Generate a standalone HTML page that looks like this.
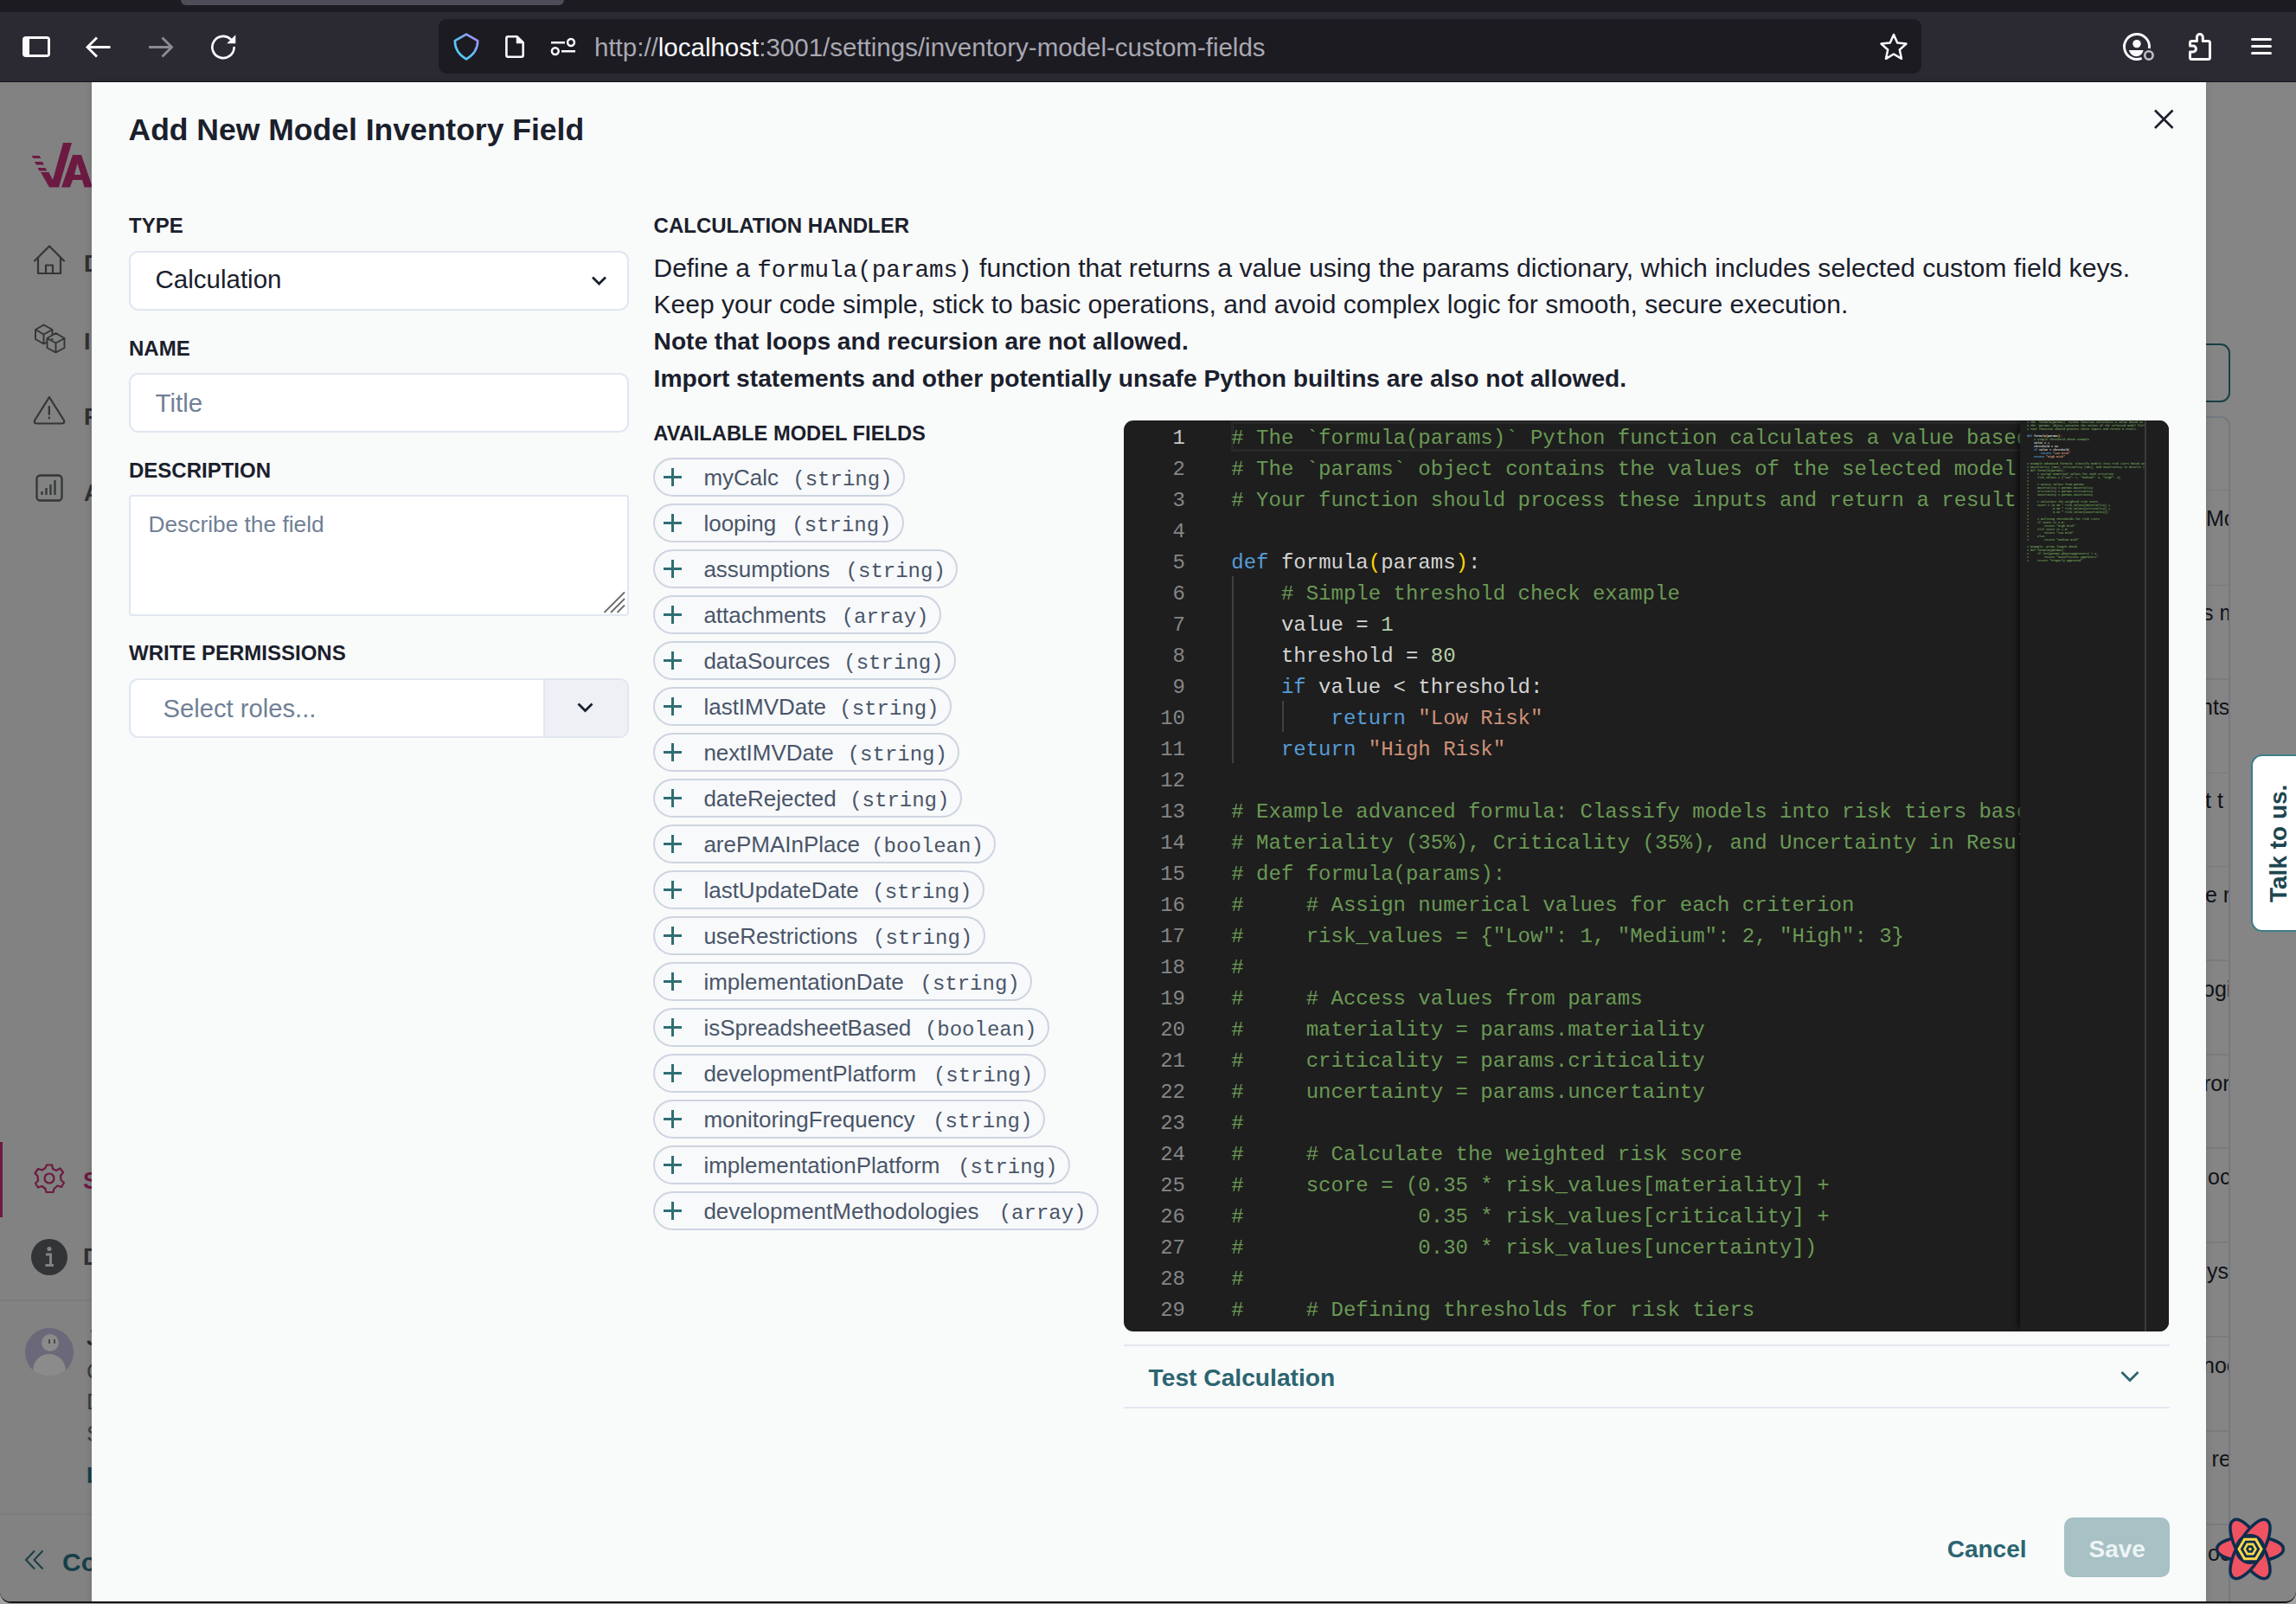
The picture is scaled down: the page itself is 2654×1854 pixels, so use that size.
<!DOCTYPE html>
<html><head><meta charset="utf-8">
<style>
*{box-sizing:border-box;margin:0;padding:0}
html,body{width:2654px;height:1854px;overflow:hidden;background:#a3a3a3}
body{position:relative;font-family:"Liberation Sans",sans-serif}
.a{position:absolute}
.t{position:absolute;white-space:pre;line-height:1}
.mono{font-family:"Liberation Mono",monospace}
svg{position:absolute;overflow:visible}
</style></head><body>
<!-- ===== BROWSER CHROME ===== -->
<div class="a" style="left:0;top:0;width:2654px;height:14px;background:#1c1b22"></div>
<div class="a" style="left:209px;top:0;width:443px;height:6px;background:#4e4c57;border-radius:0 0 6px 6px"></div>
<div class="a" style="left:0;top:14px;width:2654px;height:80px;background:#2b2a33"></div>
<div class="a" style="left:0;top:94px;width:2654px;height:1px;background:#0f0f12"></div>
<!-- sidebar toggle icon -->
<div class="a" style="left:26px;top:42px;width:32px;height:24px;background:#fbfbfe;border-radius:4px"></div>
<div class="a" style="left:34.3px;top:45.2px;width:20.7px;height:17.6px;background:#2b2a33"></div>
<!-- back -->
<svg style="left:0;top:0" width="1" height="1"><path d="M101 54.5 L127.5 54.5 M112 43.5 L101 54.5 L112 65.5" fill="none" stroke="#fbfbfe" stroke-width="2.9" stroke-linecap="butt"/></svg>
<!-- forward -->
<svg style="left:0;top:0" width="1" height="1"><path d="M172 54.5 L198.5 54.5 M187.5 43.5 L198.5 54.5 L187.5 65.5" fill="none" stroke="#8b8a90" stroke-width="2.9"/></svg>
<!-- reload -->
<svg style="left:0;top:0" width="1" height="1"><path d="M270.6 55 A12.6 12.6 0 1 1 266.5 45.2" fill="none" stroke="#fbfbfe" stroke-width="2.7" stroke-linecap="round"/><path d="M262.2 50.2 L272.3 50.2 L272.3 40.2 Z" fill="#fbfbfe"/></svg>
<!-- urlbar -->
<div class="a" style="left:507px;top:22px;width:1714px;height:63px;background:#1c1b22;border-radius:9px"></div>
<svg style="left:0;top:0" width="1" height="1"><defs><linearGradient id="sg" gradientUnits="userSpaceOnUse" x1="528" y1="64" x2="552" y2="42"><stop offset="0" stop-color="#54c8f5"/><stop offset="0.45" stop-color="#62bff7"/><stop offset="1" stop-color="#a98cf8"/></linearGradient></defs><path d="M539 39.6 L552.2 47.2 C552.2 56.5 547.5 63.3 539 68.4 C530.5 63.3 525.8 56.5 525.8 47.2 Z" fill="none" stroke="url(#sg)" stroke-width="2.6" stroke-linejoin="round"/></svg>
<svg style="left:0;top:0" width="1" height="1"><path d="M587.3 42.3 L597.8 42.3 L604.7 49.2 L604.7 63.8 Q604.7 65.7 602.8 65.7 L587.3 65.7 Q585.4 65.7 585.4 63.8 L585.4 44.2 Q585.4 42.3 587.3 42.3 Z" fill="none" stroke="#fbfbfe" stroke-width="2.6" stroke-linejoin="round"/><path d="M596.8 41 L606 50.3 L596.8 50.3 Z" fill="#fbfbfe"/></svg>
<svg style="left:0;top:0" width="1" height="1"><path d="M637 49.3 L653 49.3 M649 59.3 L665 59.3" fill="none" stroke="#fbfbfe" stroke-width="2.6"/><circle cx="660" cy="49" r="3.9" fill="none" stroke="#fbfbfe" stroke-width="2.5"/><circle cx="641.8" cy="59.1" r="3.9" fill="none" stroke="#fbfbfe" stroke-width="2.5"/></svg>
<div class="t" style="left:687px;top:40px;font-size:29.5px;color:#a9a8b1">http://<span style="color:#fbfbfe">localhost</span>:3001/settings/inventory-model-custom-fields</div>
<!-- star -->
<svg style="left:0;top:0" width="1" height="1"><path d="M2189 40 L2193.2 49.6 L2203.5 50.6 L2195.8 57.5 L2198 67.8 L2189 62.5 L2180 67.8 L2182.2 57.5 L2174.5 50.6 L2184.8 49.6 Z" fill="none" stroke="#fbfbfe" stroke-width="2.5" stroke-linejoin="round"/></svg>
<!-- account -->
<svg style="left:0;top:0" width="1" height="1"><path d="M2484.36 56.02 A14.5 14.5 0 1 0 2475.67 67.35" fill="none" stroke="#fbfbfe" stroke-width="2.9"/><circle cx="2470" cy="50.6" r="4.7" fill="#fbfbfe"/><path d="M2460.8 58 L2477.6 58 C2476.5 62.5 2473.5 65.2 2469.5 65.2 C2465.5 65.2 2462.3 62.5 2460.8 58 Z" fill="#fbfbfe"/><circle cx="2483.9" cy="63.9" r="4.7" fill="none" stroke="#bfbfc5" stroke-width="2.6"/></svg>
<!-- puzzle -->
<svg style="left:0;top:0" width="1" height="1"><path d="M2533.5 47.6 L2539.4 47.6 L2539.4 42.9 A3.45 3.45 0 0 1 2546.3 42.9 L2546.3 47.6 L2552.5 47.6 Q2554.5 47.6 2554.5 49.6 L2554.5 66.5 Q2554.5 68.5 2552.5 68.5 L2533.5 68.5 Q2531.5 68.5 2531.5 66.5 L2531.5 59.9 L2535 59.9 A3.4 3.4 0 0 0 2535 53.1 L2531.5 53.1 L2531.5 49.6 Q2531.5 47.6 2533.5 47.6 Z" fill="none" stroke="#fbfbfe" stroke-width="3" stroke-linejoin="round"/></svg>
<!-- menu -->
<div class="a" style="left:2602px;top:43.7px;width:24px;height:3px;background:#fbfbfe;border-radius:1.5px"></div>
<div class="a" style="left:2602px;top:51.8px;width:24px;height:3px;background:#fbfbfe;border-radius:1.5px"></div>
<div class="a" style="left:2602px;top:59.7px;width:24px;height:3px;background:#fbfbfe;border-radius:1.5px"></div>

<!-- ===== BACKGROUND PAGE (dimmed) ===== -->
<div class="a" style="left:0;top:94px;width:2654px;height:1758.5px;background:#151515;border-radius:0 0 13px 13px"></div>
<div id="bg" class="a" style="left:0;top:95px;width:2654px;height:1756px;background:#858585;border-radius:0 0 12px 12px;overflow:hidden">
<div class="a" style="left:0;top:-95px;width:2654px;height:1854px">
<div class="a" style="left:0;top:95px;width:106px;height:1756px;background:#818281"></div>
<!-- logo -->
<svg style="left:0;top:0" width="1" height="1">
<path d="M36.5 180 L45.5 180 L47.5 183 L38.5 183 Z M40 187 L49 187 L51 190.5 L42 190.5 Z M43.5 194 L52.5 194 L54.5 197.5 L45.5 197.5 Z" fill="#6c1a42"/>
<path d="M47 199 L56.5 199 L61 208 L73 165 L83 165 L68 216.5 L57 216.5 Z" fill="#6c1a42"/>
<path d="M71 216.5 L84 179 L94 179 L107 216.5 L97.5 216.5 L95 208 L84 208 L81 216.5 Z M86 202 L93.5 202 L89.5 189 Z" fill="#6c1a42"/>
</svg>
<!-- home -->
<svg style="left:0;top:0" width="1" height="1"><path d="M40 301.5 L57 284.5 L74 301.5 M44 298 L44 316 L70 316 L70 298 M53 316 L53 306.5 L61 306.5 L61 316" fill="none" stroke="#333538" stroke-width="2.2" stroke-linejoin="round" stroke-linecap="round"/></svg>
<div class="t" style="left:97px;top:292px;font-size:27px;font-weight:bold;color:#2f3032">Dashboard</div>
<!-- cubes -->
<svg style="left:0;top:0" width="1" height="1"><path d="M41 381 L50.5 375.5 L60.5 381 L60.5 392 L50.5 397.5 L41 392 Z M41 381 L50.5 386.5 L60.5 381 M50.5 386.5 L50.5 397.5" fill="none" stroke="#333538" stroke-width="1.9" stroke-linejoin="round"/><path d="M54.5 391 L64.5 385 L74.5 391 L74.5 402 L64.5 407.5 L54.5 402 Z M54.5 391 L64.5 396.5 L74.5 391 M64.5 396.5 L64.5 407.5" fill="#818281" stroke="#333538" stroke-width="1.9" stroke-linejoin="round"/></svg>
<div class="t" style="left:97px;top:382px;font-size:27px;font-weight:bold;color:#2f3032">Inventory</div>
<!-- warning -->
<svg style="left:0;top:0" width="1" height="1"><path d="M57 459 L74 486 Q75 489.5 71.5 489.5 L42.5 489.5 Q39 489.5 40 486 Z M56.8 470 L56.8 479 M56.8 482.5 L56.8 483.5" fill="none" stroke="#333538" stroke-width="2.2" stroke-linejoin="round" stroke-linecap="round"/></svg>
<div class="t" style="left:97px;top:469px;font-size:27px;font-weight:bold;color:#2f3032">Risk</div>
<!-- chart -->
<svg style="left:0;top:0" width="1" height="1"><rect x="42.5" y="549.5" width="29" height="29" rx="4" fill="none" stroke="#333538" stroke-width="2.3"/><path d="M48.5 572 L48.5 568 M53.5 572 L53.5 564 M58.5 572 L58.5 560 M63.5 572 L63.5 555" fill="none" stroke="#333538" stroke-width="2.2"/></svg>
<div class="t" style="left:97px;top:557px;font-size:27px;font-weight:bold;color:#2f3032">Analytics</div>
<!-- active indicator -->
<div class="a" style="left:0;top:1320.0px;width:3px;height:87px;background:#6c1a42"></div>
<svg style="left:0;top:0" width="1" height="1"><g transform="translate(57,1362)"><circle r="5.5" fill="none" stroke="#6c1a42" stroke-width="2.2"/><path d="M-3 -15.5 L3 -15.5 L4 -11 L8 -9 L12.5 -11.5 L16 -7 L13 -3 L13.5 2 L17 5 L14 10 L9.5 8.5 L5.5 12 L4.5 16 L-3.5 16 L-4.5 12 L-8.5 9 L-13 10.5 L-16 6 L-13 2.5 L-13.5 -2.5 L-16.5 -6 L-13 -11 L-8.5 -9.5 L-4.5 -12 Z" fill="none" stroke="#6c1a42" stroke-width="2.2" stroke-linejoin="round"/></g></svg>
<div class="t" style="left:96px;top:1352.0px;font-size:27px;font-weight:bold;color:#6c1a42">Settings</div>
<!-- info -->
<div class="a" style="left:36px;top:1432.0px;width:42px;height:42px;border-radius:50%;background:#323436"></div>
<svg style="left:0;top:0" width="1" height="1"><circle cx="57" cy="1443.5" r="2.6" fill="#818281"/><path d="M 53 1450 L 58.5 1450 L 58.5 1462 M 52.5 1462.5 L 62 1462.5" fill="none" stroke="#818281" stroke-width="3"/></svg>
<div class="t" style="left:96px;top:1440.0px;font-size:27px;font-weight:bold;color:#2f3032">Docs</div>
<div class="a" style="left:0;top:1502.0px;width:106px;height:1.5px;background:#7b7c7d"></div>
<!-- avatar -->
<div class="a" style="left:29px;top:1535.0px;width:56px;height:56px;border-radius:50%;background:#6a6879;overflow:hidden">
 <div class="a" style="left:19px;top:7px;width:20px;height:20px;border-radius:50%;background:#8b8b8b"></div>
 <div class="a" style="left:9px;top:30px;width:38px;height:38px;border-radius:50%;background:#8b8b8b"></div>
</div>
<div class="a" style="left:56.3px;top:1548px;width:2px;height:4.5px;background:#4a4a4a"></div>
<div class="a" style="left:61.6px;top:1548px;width:2px;height:4.5px;background:#4a4a4a"></div>
<div class="t" style="left:100px;top:1533.0px;font-size:26px;font-weight:bold;color:#2a2b2c">John</div>
<div class="t" style="left:100px;top:1572.0px;font-size:26px;color:#3a3b3c">Customer</div>
<div class="t" style="left:100px;top:1607px;font-size:26px;color:#3a3b3c">Developer</div>
<div class="t" style="left:100px;top:1644px;font-size:26px;color:#3a3b3c">Settings</div>
<div class="t" style="left:100px;top:1692px;font-size:26px;font-weight:bold;color:#173f49">Logout</div>
<div class="a" style="left:0;top:1749.0px;width:106px;height:1.5px;background:#7b7c7d"></div>
<svg style="left:0;top:0" width="1" height="1"><path d="M 40 1792.5 L 30 1803 L 40 1813.5 M 49.5 1792.5 L 39.5 1803 L 49.5 1813.5" fill="none" stroke="#173f49" stroke-width="2"/></svg>
<div class="t" style="left:72px;top:1791.0px;font-size:30px;font-weight:bold;color:#173f49">Collapse</div>
<!-- right side -->
<div class="a" style="left:2440px;top:397.0px;width:137.5px;height:68px;border:2.2px solid #183f46;border-radius:11px"></div>
<div class="a" style="left:2440px;top:481.0px;width:137.5px;height:1460px;border:2px solid #747980;border-radius:11px"></div>
<div class="a" style="left:2440px;top:565.5px;width:137px;height:1.5px;background:#7a7b7c"></div>
<div class="a" style="left:2440px;top:675.5px;width:137px;height:1.5px;background:#7a7b7c"></div>
<div class="a" style="left:2440px;top:784.0px;width:137px;height:1.5px;background:#7a7b7c"></div>
<div class="a" style="left:2440px;top:892.5px;width:137px;height:1.5px;background:#7a7b7c"></div>
<div class="a" style="left:2440px;top:1000.5px;width:137px;height:1.5px;background:#7a7b7c"></div>
<div class="a" style="left:2440px;top:1109.0px;width:137px;height:1.5px;background:#7a7b7c"></div>
<div class="a" style="left:2440px;top:1218.0px;width:137px;height:1.5px;background:#7a7b7c"></div>
<div class="a" style="left:2440px;top:1326.0px;width:137px;height:1.5px;background:#7a7b7c"></div>
<div class="a" style="left:2440px;top:1435.0px;width:137px;height:1.5px;background:#7a7b7c"></div>
<div class="a" style="left:2440px;top:1544.0px;width:137px;height:1.5px;background:#7a7b7c"></div>
<div class="a" style="left:2440px;top:1653.0px;width:137px;height:1.5px;background:#7a7b7c"></div>
<div class="a" style="left:2440px;top:1761.0px;width:137px;height:1.5px;background:#7a7b7c"></div>
<div class="a" style="left:2440px;top:481px;width:136px;height:1370px;overflow:hidden"><div class="a" style="left:-2440px;top:-481px;width:2654px;height:1854px">
<div class="t" style="left:2550px;top:587.33px;font-size:25px;color:#111318">Mod</div>
<div class="t" style="left:2546px;top:696.03px;font-size:25px;color:#111318">s m</div>
<div class="t" style="left:2544px;top:804.73px;font-size:25px;color:#111318">nts</div>
<div class="t" style="left:2549px;top:913.43px;font-size:25px;color:#111318">t t</div>
<div class="t" style="left:2549px;top:1022.13px;font-size:25px;color:#111318">e r</div>
<div class="t" style="left:2546px;top:1130.83px;font-size:25px;color:#111318">ogi</div>
<div class="t" style="left:2547px;top:1239.53px;font-size:25px;color:#111318">ron</div>
<div class="t" style="left:2552px;top:1348.23px;font-size:25px;color:#111318">oc</div>
<div class="t" style="left:2551px;top:1456.93px;font-size:25px;color:#111318">ys</div>
<div class="t" style="left:2546px;top:1565.63px;font-size:25px;color:#111318">noc</div>
<div class="t" style="left:2556.6px;top:1674.33px;font-size:25px;color:#111318">re</div>
<div class="t" style="left:2552px;top:1783.03px;font-size:25px;color:#111318">oc</div>
</div></div>
</div>
</div>

<!-- ===== MODAL ===== -->
<div id="modal" class="a" style="left:106px;top:95px;width:2444px;height:1756px;background:#f9fafa;overflow:hidden;box-shadow:0 0 9px rgba(0,0,0,0.13)">
<div class="a" style="left:-106px;top:-95px;width:2654px;height:1854px">
<div class="t" style="left:148.5px;top:132.94px;font-size:35.5px;font-weight:bold;color:#1a202c">Add New Model Inventory Field</div>
<svg style="left:0;top:0" width="1" height="1"><path d="M2491 127.5 L2511.5 148 M2511.5 127.5 L2491 148" stroke="#1a202c" stroke-width="2.6" fill="none"/></svg>
<div class="t" style="left:149px;top:248.68px;font-size:24px;font-weight:bold;color:#1a202c">TYPE</div>
<div class="t" style="left:149px;top:390.68px;font-size:24px;font-weight:bold;color:#1a202c">NAME</div>
<div class="t" style="left:149px;top:532.38px;font-size:24px;font-weight:bold;color:#1a202c">DESCRIPTION</div>
<div class="t" style="left:149px;top:742.68px;font-size:24px;font-weight:bold;color:#1a202c">WRITE PERMISSIONS</div>
<div class="t" style="left:755.6px;top:249.38px;font-size:24px;font-weight:bold;color:#1a202c">CALCULATION HANDLER</div>
<div class="t" style="left:755.3px;top:490.13px;font-size:23.7px;font-weight:bold;color:#1a202c">AVAILABLE MODEL FIELDS</div>
<div class="a" style="left:148.5px;top:289.5px;width:578px;height:69px;background:#fff;border:2px solid #e1e6f0;border-radius:11px"></div>
<div class="t" style="left:179.5px;top:308.02px;font-size:29.5px;color:#1a202c">Calculation</div>
<svg style="left:0;top:0" width="1" height="1"><path d="M685 320.5 L692.5 328 L700 320.5" stroke="#1a202c" stroke-width="2.8" fill="none"/></svg>
<div class="a" style="left:148.5px;top:430.5px;width:578px;height:69px;background:#fff;border:2px solid #e1e6f0;border-radius:11px"></div>
<div class="t" style="left:179.5px;top:450.62px;font-size:29.5px;color:#718096">Title</div>
<div class="a" style="left:148.5px;top:572px;width:578px;height:140px;background:#fff;border:2px solid #e1e6f0;border-radius:4px"></div>
<div class="t" style="left:171.5px;top:592.73px;font-size:26.3px;color:#718096">Describe the field</div>
<svg style="left:0;top:0" width="1" height="1"><path d="M698.5 708 L722 684.5 M706 708 L722 692 M713.5 708 L722 699.5" stroke="#6b6b6b" stroke-width="1.8" fill="none"/></svg>
<div class="a" style="left:148.5px;top:784px;width:578px;height:69px;background:#fff;border:2px solid #e1e6f0;border-radius:11px;overflow:hidden"><div class="a" style="left:477px;top:0;width:100px;height:65px;background:#eef0f6;border-left:2px solid #e1e6f0"></div></div>
<div class="t" style="left:188.6px;top:804.78px;font-size:29.2px;color:#718096">Select roles...</div>
<svg style="left:0;top:0" width="1" height="1"><path d="M668.5 813.5 L676.5 821.5 L684.5 813.5" stroke="#1a202c" stroke-width="2.8" fill="none"/></svg>
<div class="t" style="left:755.6px;top:294.68px;font-size:29.9px;color:#1a202c">Define a <span class="mono" style="font-size:27.6px">formula(params)</span><span style="font-size:30.2px"> function that returns a value using the params dictionary, which includes selected custom field keys.</span></div>
<div class="t" style="left:755.6px;top:336.8px;font-size:30px;color:#1a202c">Keep your code simple, stick to basic operations, and avoid complex logic for smooth, secure execution.</div>
<div class="t" style="left:755.6px;top:380.81px;font-size:28.1px;font-weight:bold;color:#1a202c">Note that loops and recursion are not allowed.</div>
<div class="t" style="left:755.6px;top:422.92px;font-size:28.2px;font-weight:bold;color:#1a202c">Import statements and other potentially unsafe Python builtins are also not allowed.</div>
<div class="a" style="left:755.2px;top:529.1px;width:290.8px;height:45px;border:2px solid #cdd5e0;border-radius:23px;background:#f7f9fb"></div>
<svg style="left:0;top:0" width="1" height="1"><path d="M767 551.6 L788 551.6 M777.5 541.1 L777.5 562.1" stroke="#2f6e73" stroke-width="3" fill="none"/></svg>
<div class="t" style="left:813.4px;top:539.19px;font-size:26px;color:#4a5568">myCalc</div>
<div class="t mono" style="left:916.3px;top:542.81px;font-size:24px;color:#4a5568">(string)</div>
<div class="a" style="left:755.2px;top:582.1px;width:289.8px;height:45px;border:2px solid #cdd5e0;border-radius:23px;background:#f7f9fb"></div>
<svg style="left:0;top:0" width="1" height="1"><path d="M767 604.6 L788 604.6 M777.5 594.1 L777.5 615.1" stroke="#2f6e73" stroke-width="3" fill="none"/></svg>
<div class="t" style="left:813.4px;top:592.19px;font-size:26px;color:#4a5568">looping</div>
<div class="t mono" style="left:915.3px;top:595.81px;font-size:24px;color:#4a5568">(string)</div>
<div class="a" style="left:755.2px;top:635.1px;width:352.1px;height:45px;border:2px solid #cdd5e0;border-radius:23px;background:#f7f9fb"></div>
<svg style="left:0;top:0" width="1" height="1"><path d="M767 657.6 L788 657.6 M777.5 647.1 L777.5 668.1" stroke="#2f6e73" stroke-width="3" fill="none"/></svg>
<div class="t" style="left:813.4px;top:645.19px;font-size:26px;color:#4a5568">assumptions</div>
<div class="t mono" style="left:977.6px;top:648.81px;font-size:24px;color:#4a5568">(string)</div>
<div class="a" style="left:755.2px;top:688.1px;width:332.8px;height:45px;border:2px solid #cdd5e0;border-radius:23px;background:#f7f9fb"></div>
<svg style="left:0;top:0" width="1" height="1"><path d="M767 710.6 L788 710.6 M777.5 700.1 L777.5 721.1" stroke="#2f6e73" stroke-width="3" fill="none"/></svg>
<div class="t" style="left:813.4px;top:698.19px;font-size:26px;color:#4a5568">attachments</div>
<div class="t mono" style="left:972.7px;top:701.81px;font-size:24px;color:#4a5568">(array)</div>
<div class="a" style="left:755.2px;top:741.1px;width:349.8px;height:45px;border:2px solid #cdd5e0;border-radius:23px;background:#f7f9fb"></div>
<svg style="left:0;top:0" width="1" height="1"><path d="M767 763.6 L788 763.6 M777.5 753.1 L777.5 774.1" stroke="#2f6e73" stroke-width="3" fill="none"/></svg>
<div class="t" style="left:813.4px;top:751.19px;font-size:26px;color:#4a5568">dataSources</div>
<div class="t mono" style="left:975.3px;top:754.81px;font-size:24px;color:#4a5568">(string)</div>
<div class="a" style="left:755.2px;top:794.1px;width:344.8px;height:45px;border:2px solid #cdd5e0;border-radius:23px;background:#f7f9fb"></div>
<svg style="left:0;top:0" width="1" height="1"><path d="M767 816.6 L788 816.6 M777.5 806.1 L777.5 827.1" stroke="#2f6e73" stroke-width="3" fill="none"/></svg>
<div class="t" style="left:813.4px;top:804.19px;font-size:26px;color:#4a5568">lastIMVDate</div>
<div class="t mono" style="left:970.3px;top:807.81px;font-size:24px;color:#4a5568">(string)</div>
<div class="a" style="left:755.2px;top:847.1px;width:354.2px;height:45px;border:2px solid #cdd5e0;border-radius:23px;background:#f7f9fb"></div>
<svg style="left:0;top:0" width="1" height="1"><path d="M767 869.6 L788 869.6 M777.5 859.1 L777.5 880.1" stroke="#2f6e73" stroke-width="3" fill="none"/></svg>
<div class="t" style="left:813.4px;top:857.19px;font-size:26px;color:#4a5568">nextIMVDate</div>
<div class="t mono" style="left:979.7px;top:860.81px;font-size:24px;color:#4a5568">(string)</div>
<div class="a" style="left:755.2px;top:900.1px;width:356.7px;height:45px;border:2px solid #cdd5e0;border-radius:23px;background:#f7f9fb"></div>
<svg style="left:0;top:0" width="1" height="1"><path d="M767 922.6 L788 922.6 M777.5 912.1 L777.5 933.1" stroke="#2f6e73" stroke-width="3" fill="none"/></svg>
<div class="t" style="left:813.4px;top:910.19px;font-size:26px;color:#4a5568">dateRejected</div>
<div class="t mono" style="left:982.2px;top:913.81px;font-size:24px;color:#4a5568">(string)</div>
<div class="a" style="left:755.2px;top:953.1px;width:396.1px;height:45px;border:2px solid #cdd5e0;border-radius:23px;background:#f7f9fb"></div>
<svg style="left:0;top:0" width="1" height="1"><path d="M767 975.6 L788 975.6 M777.5 965.1 L777.5 986.1" stroke="#2f6e73" stroke-width="3" fill="none"/></svg>
<div class="t" style="left:813.4px;top:963.19px;font-size:26px;color:#4a5568">arePMAInPlace</div>
<div class="t mono" style="left:1007.2px;top:966.81px;font-size:24px;color:#4a5568">(boolean)</div>
<div class="a" style="left:755.2px;top:1006.1px;width:382.8px;height:45px;border:2px solid #cdd5e0;border-radius:23px;background:#f7f9fb"></div>
<svg style="left:0;top:0" width="1" height="1"><path d="M767 1028.6 L788 1028.6 M777.5 1018.1 L777.5 1039.1" stroke="#2f6e73" stroke-width="3" fill="none"/></svg>
<div class="t" style="left:813.4px;top:1016.19px;font-size:26px;color:#4a5568">lastUpdateDate</div>
<div class="t mono" style="left:1008.3px;top:1019.81px;font-size:24px;color:#4a5568">(string)</div>
<div class="a" style="left:755.2px;top:1059.1px;width:383.5px;height:45px;border:2px solid #cdd5e0;border-radius:23px;background:#f7f9fb"></div>
<svg style="left:0;top:0" width="1" height="1"><path d="M767 1081.6 L788 1081.6 M777.5 1071.1 L777.5 1092.1" stroke="#2f6e73" stroke-width="3" fill="none"/></svg>
<div class="t" style="left:813.4px;top:1069.19px;font-size:26px;color:#4a5568">useRestrictions</div>
<div class="t mono" style="left:1009.0px;top:1072.81px;font-size:24px;color:#4a5568">(string)</div>
<div class="a" style="left:755.2px;top:1112.1px;width:438.0px;height:45px;border:2px solid #cdd5e0;border-radius:23px;background:#f7f9fb"></div>
<svg style="left:0;top:0" width="1" height="1"><path d="M767 1134.6 L788 1134.6 M777.5 1124.1 L777.5 1145.1" stroke="#2f6e73" stroke-width="3" fill="none"/></svg>
<div class="t" style="left:813.4px;top:1122.19px;font-size:26px;color:#4a5568">implementationDate</div>
<div class="t mono" style="left:1063.5px;top:1125.81px;font-size:24px;color:#4a5568">(string)</div>
<div class="a" style="left:755.2px;top:1165.1px;width:457.8px;height:45px;border:2px solid #cdd5e0;border-radius:23px;background:#f7f9fb"></div>
<svg style="left:0;top:0" width="1" height="1"><path d="M767 1187.6 L788 1187.6 M777.5 1177.1 L777.5 1198.1" stroke="#2f6e73" stroke-width="3" fill="none"/></svg>
<div class="t" style="left:813.4px;top:1175.19px;font-size:26px;color:#4a5568">isSpreadsheetBased</div>
<div class="t mono" style="left:1068.9px;top:1178.81px;font-size:24px;color:#4a5568">(boolean)</div>
<div class="a" style="left:755.2px;top:1218.1px;width:453.4px;height:45px;border:2px solid #cdd5e0;border-radius:23px;background:#f7f9fb"></div>
<svg style="left:0;top:0" width="1" height="1"><path d="M767 1240.6 L788 1240.6 M777.5 1230.1 L777.5 1251.1" stroke="#2f6e73" stroke-width="3" fill="none"/></svg>
<div class="t" style="left:813.4px;top:1228.19px;font-size:26px;color:#4a5568">developmentPlatform</div>
<div class="t mono" style="left:1078.9px;top:1231.81px;font-size:24px;color:#4a5568">(string)</div>
<div class="a" style="left:755.2px;top:1271.1px;width:452.7px;height:45px;border:2px solid #cdd5e0;border-radius:23px;background:#f7f9fb"></div>
<svg style="left:0;top:0" width="1" height="1"><path d="M767 1293.6 L788 1293.6 M777.5 1283.1 L777.5 1304.1" stroke="#2f6e73" stroke-width="3" fill="none"/></svg>
<div class="t" style="left:813.4px;top:1281.19px;font-size:26px;color:#4a5568">monitoringFrequency</div>
<div class="t mono" style="left:1078.2px;top:1284.81px;font-size:24px;color:#4a5568">(string)</div>
<div class="a" style="left:755.2px;top:1324.1px;width:481.7px;height:45px;border:2px solid #cdd5e0;border-radius:23px;background:#f7f9fb"></div>
<svg style="left:0;top:0" width="1" height="1"><path d="M767 1346.6 L788 1346.6 M777.5 1336.1 L777.5 1357.1" stroke="#2f6e73" stroke-width="3" fill="none"/></svg>
<div class="t" style="left:813.4px;top:1334.19px;font-size:26px;color:#4a5568">implementationPlatform</div>
<div class="t mono" style="left:1107.2px;top:1337.81px;font-size:24px;color:#4a5568">(string)</div>
<div class="a" style="left:755.2px;top:1377.1px;width:514.8px;height:45px;border:2px solid #cdd5e0;border-radius:23px;background:#f7f9fb"></div>
<svg style="left:0;top:0" width="1" height="1"><path d="M767 1399.6 L788 1399.6 M777.5 1389.1 L777.5 1410.1" stroke="#2f6e73" stroke-width="3" fill="none"/></svg>
<div class="t" style="left:813.4px;top:1387.19px;font-size:26px;color:#4a5568">developmentMethodologies</div>
<div class="t mono" style="left:1154.7px;top:1390.81px;font-size:24px;color:#4a5568">(array)</div>
<div class="a" style="left:1299px;top:1554px;width:1209px;height:2px;background:#e4e7f1"></div>
<div class="a" style="left:1299px;top:1626px;width:1209px;height:2px;background:#e4e7f1"></div>
<div class="t" style="left:1327.6px;top:1577.92px;font-size:28.2px;font-weight:bold;color:#2b6571">Test Calculation</div>
<svg style="left:0;top:0" width="1" height="1"><path d="M2452.5 1586 L2462 1595.5 L2471.5 1586" stroke="#2b6571" stroke-width="2.8" fill="none"/></svg>
<div class="t" style="left:2250.7px;top:1777.29px;font-size:28px;font-weight:bold;color:#2b6571">Cancel</div>
<div class="a" style="left:2386px;top:1754px;width:122px;height:69px;background:#a7c1c5;border-radius:10px"></div>
<div class="t" style="left:2414.5px;top:1777.29px;font-size:28px;font-weight:bold;color:#eef4f5">Save</div>
<div class="a" style="left:1299px;top:486px;width:1208px;height:1053px;background:#1e1e1e;border-radius:11px;overflow:hidden">
<div class="a" style="left:-1299px;top:-486px;width:2654px;height:1854px">
<div class="a" style="left:1422.5px;top:487px;width:920px;height:35px;border:3px solid #282828"></div>
<div class="t mono" style="left:1270px;width:100px;text-align:right;top:494.91px;font-size:24px;color:#c6c6c6">1</div>
<div class="t mono" style="left:1423.3px;top:494.91px;font-size:24px"><span style="color:#6a9955"># The `formula(params)` Python function calculates a value based on the values of the selected model fields.</span></div>
<div class="t mono" style="left:1270px;width:100px;text-align:right;top:530.91px;font-size:24px;color:#858585">2</div>
<div class="t mono" style="left:1423.3px;top:530.91px;font-size:24px"><span style="color:#6a9955"># The `params` object contains the values of the selected model fields.</span></div>
<div class="t mono" style="left:1270px;width:100px;text-align:right;top:566.91px;font-size:24px;color:#858585">3</div>
<div class="t mono" style="left:1423.3px;top:566.91px;font-size:24px"><span style="color:#6a9955"># Your function should process these inputs and return a result.</span></div>
<div class="t mono" style="left:1270px;width:100px;text-align:right;top:602.91px;font-size:24px;color:#858585">4</div>
<div class="t mono" style="left:1270px;width:100px;text-align:right;top:638.91px;font-size:24px;color:#858585">5</div>
<div class="t mono" style="left:1423.3px;top:638.91px;font-size:24px"><span style="color:#569cd6">def</span><span style="color:#d4d4d4"> formula</span><span style="color:#ffd700">(</span><span style="color:#d4d4d4">params</span><span style="color:#ffd700">)</span><span style="color:#d4d4d4">:</span></div>
<div class="t mono" style="left:1270px;width:100px;text-align:right;top:674.91px;font-size:24px;color:#858585">6</div>
<div class="t mono" style="left:1423.3px;top:674.91px;font-size:24px"><span style="color:#d4d4d4">    </span><span style="color:#6a9955"># Simple threshold check example</span></div>
<div class="t mono" style="left:1270px;width:100px;text-align:right;top:710.91px;font-size:24px;color:#858585">7</div>
<div class="t mono" style="left:1423.3px;top:710.91px;font-size:24px"><span style="color:#d4d4d4">    value = </span><span style="color:#b5cea8">1</span></div>
<div class="t mono" style="left:1270px;width:100px;text-align:right;top:746.91px;font-size:24px;color:#858585">8</div>
<div class="t mono" style="left:1423.3px;top:746.91px;font-size:24px"><span style="color:#d4d4d4">    threshold = </span><span style="color:#b5cea8">80</span></div>
<div class="t mono" style="left:1270px;width:100px;text-align:right;top:782.91px;font-size:24px;color:#858585">9</div>
<div class="t mono" style="left:1423.3px;top:782.91px;font-size:24px"><span style="color:#d4d4d4">    </span><span style="color:#569cd6">if</span><span style="color:#d4d4d4"> value &lt; threshold:</span></div>
<div class="t mono" style="left:1270px;width:100px;text-align:right;top:818.91px;font-size:24px;color:#858585">10</div>
<div class="t mono" style="left:1423.3px;top:818.91px;font-size:24px"><span style="color:#d4d4d4">        </span><span style="color:#569cd6">return</span><span style="color:#d4d4d4"> </span><span style="color:#ce9178">&quot;Low Risk&quot;</span></div>
<div class="t mono" style="left:1270px;width:100px;text-align:right;top:854.91px;font-size:24px;color:#858585">11</div>
<div class="t mono" style="left:1423.3px;top:854.91px;font-size:24px"><span style="color:#d4d4d4">    </span><span style="color:#569cd6">return</span><span style="color:#d4d4d4"> </span><span style="color:#ce9178">&quot;High Risk&quot;</span></div>
<div class="t mono" style="left:1270px;width:100px;text-align:right;top:890.91px;font-size:24px;color:#858585">12</div>
<div class="t mono" style="left:1270px;width:100px;text-align:right;top:926.91px;font-size:24px;color:#858585">13</div>
<div class="t mono" style="left:1423.3px;top:926.91px;font-size:24px"><span style="color:#6a9955"># Example advanced formula: Classify models into risk tiers based on weighted scores</span></div>
<div class="t mono" style="left:1270px;width:100px;text-align:right;top:962.91px;font-size:24px;color:#858585">14</div>
<div class="t mono" style="left:1423.3px;top:962.91px;font-size:24px"><span style="color:#6a9955"># Materiality (35%), Criticality (35%), and Uncertainty in Results (30%)</span></div>
<div class="t mono" style="left:1270px;width:100px;text-align:right;top:998.91px;font-size:24px;color:#858585">15</div>
<div class="t mono" style="left:1423.3px;top:998.91px;font-size:24px"><span style="color:#6a9955"># def formula(params):</span></div>
<div class="t mono" style="left:1270px;width:100px;text-align:right;top:1034.91px;font-size:24px;color:#858585">16</div>
<div class="t mono" style="left:1423.3px;top:1034.91px;font-size:24px"><span style="color:#6a9955">#     # Assign numerical values for each criterion</span></div>
<div class="t mono" style="left:1270px;width:100px;text-align:right;top:1070.91px;font-size:24px;color:#858585">17</div>
<div class="t mono" style="left:1423.3px;top:1070.91px;font-size:24px"><span style="color:#6a9955">#     risk_values = {&quot;Low&quot;: 1, &quot;Medium&quot;: 2, &quot;High&quot;: 3}</span></div>
<div class="t mono" style="left:1270px;width:100px;text-align:right;top:1106.91px;font-size:24px;color:#858585">18</div>
<div class="t mono" style="left:1423.3px;top:1106.91px;font-size:24px"><span style="color:#6a9955">#</span></div>
<div class="t mono" style="left:1270px;width:100px;text-align:right;top:1142.91px;font-size:24px;color:#858585">19</div>
<div class="t mono" style="left:1423.3px;top:1142.91px;font-size:24px"><span style="color:#6a9955">#     # Access values from params</span></div>
<div class="t mono" style="left:1270px;width:100px;text-align:right;top:1178.91px;font-size:24px;color:#858585">20</div>
<div class="t mono" style="left:1423.3px;top:1178.91px;font-size:24px"><span style="color:#6a9955">#     materiality = params.materiality</span></div>
<div class="t mono" style="left:1270px;width:100px;text-align:right;top:1214.91px;font-size:24px;color:#858585">21</div>
<div class="t mono" style="left:1423.3px;top:1214.91px;font-size:24px"><span style="color:#6a9955">#     criticality = params.criticality</span></div>
<div class="t mono" style="left:1270px;width:100px;text-align:right;top:1250.91px;font-size:24px;color:#858585">22</div>
<div class="t mono" style="left:1423.3px;top:1250.91px;font-size:24px"><span style="color:#6a9955">#     uncertainty = params.uncertainty</span></div>
<div class="t mono" style="left:1270px;width:100px;text-align:right;top:1286.91px;font-size:24px;color:#858585">23</div>
<div class="t mono" style="left:1423.3px;top:1286.91px;font-size:24px"><span style="color:#6a9955">#</span></div>
<div class="t mono" style="left:1270px;width:100px;text-align:right;top:1322.91px;font-size:24px;color:#858585">24</div>
<div class="t mono" style="left:1423.3px;top:1322.91px;font-size:24px"><span style="color:#6a9955">#     # Calculate the weighted risk score</span></div>
<div class="t mono" style="left:1270px;width:100px;text-align:right;top:1358.91px;font-size:24px;color:#858585">25</div>
<div class="t mono" style="left:1423.3px;top:1358.91px;font-size:24px"><span style="color:#6a9955">#     score = (0.35 * risk_values[materiality] +</span></div>
<div class="t mono" style="left:1270px;width:100px;text-align:right;top:1394.91px;font-size:24px;color:#858585">26</div>
<div class="t mono" style="left:1423.3px;top:1394.91px;font-size:24px"><span style="color:#6a9955">#              0.35 * risk_values[criticality] +</span></div>
<div class="t mono" style="left:1270px;width:100px;text-align:right;top:1430.91px;font-size:24px;color:#858585">27</div>
<div class="t mono" style="left:1423.3px;top:1430.91px;font-size:24px"><span style="color:#6a9955">#              0.30 * risk_values[uncertainty])</span></div>
<div class="t mono" style="left:1270px;width:100px;text-align:right;top:1466.91px;font-size:24px;color:#858585">28</div>
<div class="t mono" style="left:1423.3px;top:1466.91px;font-size:24px"><span style="color:#6a9955">#</span></div>
<div class="t mono" style="left:1270px;width:100px;text-align:right;top:1502.91px;font-size:24px;color:#858585">29</div>
<div class="t mono" style="left:1423.3px;top:1502.91px;font-size:24px"><span style="color:#6a9955">#     # Defining thresholds for risk tiers</span></div>
<div class="t mono" style="left:1270px;width:100px;text-align:right;top:1538.91px;font-size:24px;color:#858585">30</div>
<div class="t mono" style="left:1423.3px;top:1538.91px;font-size:24px"><span style="color:#6a9955">#     if score &gt;= 2.5:</span></div>
<div class="a" style="left:1424px;top:666px;width:2px;height:216px;background:#404040"></div>
<div class="a" style="left:1481.6px;top:810px;width:2px;height:36px;background:#404040"></div>
<div class="a" style="left:2335px;top:486px;width:144px;height:1053px;background:#1e1e1e;box-shadow:-6px 0 6px -3px rgba(0,0,0,0.55)"></div>
<div class="a mono" style="left:2342.8px;top:486px;width:1000px;font-size:24px;line-height:36px;transform-origin:0 0;transform:scale(0.13889,0.11111);font-weight:bold"><div style="height:36px;white-space:pre"><span style="color:#6a9955"># The `formula(params)` Python function calculates a value based on the values of the selected model fields.</span></div><div style="height:36px;white-space:pre"><span style="color:#6a9955"># The `params` object contains the values of the selected model fields.</span></div><div style="height:36px;white-space:pre"><span style="color:#6a9955"># Your function should process these inputs and return a result.</span></div><div style="height:36px;white-space:pre">&#8203;</div><div style="height:36px;white-space:pre"><span style="color:#569cd6">def</span><span style="color:#d4d4d4"> formula</span><span style="color:#ffd700">(</span><span style="color:#d4d4d4">params</span><span style="color:#ffd700">)</span><span style="color:#d4d4d4">:</span></div><div style="height:36px;white-space:pre"><span style="color:#d4d4d4">    </span><span style="color:#6a9955"># Simple threshold check example</span></div><div style="height:36px;white-space:pre"><span style="color:#d4d4d4">    value = </span><span style="color:#b5cea8">1</span></div><div style="height:36px;white-space:pre"><span style="color:#d4d4d4">    threshold = </span><span style="color:#b5cea8">80</span></div><div style="height:36px;white-space:pre"><span style="color:#d4d4d4">    </span><span style="color:#569cd6">if</span><span style="color:#d4d4d4"> value &lt; threshold:</span></div><div style="height:36px;white-space:pre"><span style="color:#d4d4d4">        </span><span style="color:#569cd6">return</span><span style="color:#d4d4d4"> </span><span style="color:#ce9178">&quot;Low Risk&quot;</span></div><div style="height:36px;white-space:pre"><span style="color:#d4d4d4">    </span><span style="color:#569cd6">return</span><span style="color:#d4d4d4"> </span><span style="color:#ce9178">&quot;High Risk&quot;</span></div><div style="height:36px;white-space:pre">&#8203;</div><div style="height:36px;white-space:pre"><span style="color:#6a9955"># Example advanced formula: Classify models into risk tiers based on weighted scores</span></div><div style="height:36px;white-space:pre"><span style="color:#6a9955"># Materiality (35%), Criticality (35%), and Uncertainty in Results (30%)</span></div><div style="height:36px;white-space:pre"><span style="color:#6a9955"># def formula(params):</span></div><div style="height:36px;white-space:pre"><span style="color:#6a9955">#     # Assign numerical values for each criterion</span></div><div style="height:36px;white-space:pre"><span style="color:#6a9955">#     risk_values = {&quot;Low&quot;: 1, &quot;Medium&quot;: 2, &quot;High&quot;: 3}</span></div><div style="height:36px;white-space:pre"><span style="color:#6a9955">#</span></div><div style="height:36px;white-space:pre"><span style="color:#6a9955">#     # Access values from params</span></div><div style="height:36px;white-space:pre"><span style="color:#6a9955">#     materiality = params.materiality</span></div><div style="height:36px;white-space:pre"><span style="color:#6a9955">#     criticality = params.criticality</span></div><div style="height:36px;white-space:pre"><span style="color:#6a9955">#     uncertainty = params.uncertainty</span></div><div style="height:36px;white-space:pre"><span style="color:#6a9955">#</span></div><div style="height:36px;white-space:pre"><span style="color:#6a9955">#     # Calculate the weighted risk score</span></div><div style="height:36px;white-space:pre"><span style="color:#6a9955">#     score = (0.35 * risk_values[materiality] +</span></div><div style="height:36px;white-space:pre"><span style="color:#6a9955">#              0.35 * risk_values[criticality] +</span></div><div style="height:36px;white-space:pre"><span style="color:#6a9955">#              0.30 * risk_values[uncertainty])</span></div><div style="height:36px;white-space:pre"><span style="color:#6a9955">#</span></div><div style="height:36px;white-space:pre"><span style="color:#6a9955">#     # Defining thresholds for risk tiers</span></div><div style="height:36px;white-space:pre"><span style="color:#6a9955">#     if score &gt;= 2.5:</span></div><div style="height:36px;white-space:pre"><span style="color:#6a9955">#         return &quot;High Risk&quot;</span></div><div style="height:36px;white-space:pre"><span style="color:#6a9955">#     elif score &gt;= 1.5:</span></div><div style="height:36px;white-space:pre"><span style="color:#6a9955">#         return &quot;Low Risk&quot;</span></div><div style="height:36px;white-space:pre"><span style="color:#6a9955">#     else:</span></div><div style="height:36px;white-space:pre"><span style="color:#6a9955">#         return &quot;Medium Risk&quot;</span></div><div style="height:36px;white-space:pre">&#8203;</div><div style="height:36px;white-space:pre"><span style="color:#6a9955"># Example: Array length check</span></div><div style="height:36px;white-space:pre"><span style="color:#6a9955"># def formula(params):</span></div><div style="height:36px;white-space:pre"><span style="color:#6a9955">#     if len(params.phaseXApprovers) &lt; 3:</span></div><div style="height:36px;white-space:pre"><span style="color:#6a9955">#         return &quot;Insufficient Approvers&quot;</span></div><div style="height:36px;white-space:pre"><span style="color:#6a9955">#     return &quot;Properly Approved&quot;</span></div></div>
<div class="a" style="left:2479px;top:486px;width:1.5px;height:1053px;background:#3a3a3a"></div>
<div class="a" style="left:2480.5px;top:486px;width:27px;height:1053px;background:#1e1e1e"></div>
</div></div>
</div>
</div>
<!-- talk to us tab -->
<div class="a" style="left:2602px;top:871.5px;width:70px;height:205px;background:#fff;border:2px solid #3d7d89;border-radius:13px"></div>
<div class="t" style="left:2620.1px;top:1043px;font-size:28px;font-weight:bold;color:#1d4650;transform-origin:0 0;transform:rotate(-90deg)">Talk to us.</div>
<!-- react query logo -->
<svg style="left:0;top:0" width="1" height="1"><g transform="translate(2601,1790.5)">
<ellipse rx="38.5" ry="14.5" fill="#ef5261" stroke="#0e2e4e" stroke-width="3.5"/>
<ellipse rx="38.5" ry="14.5" fill="#ef5261" stroke="#0e2e4e" stroke-width="3.5" transform="rotate(60)"/>
<ellipse rx="38.5" ry="14.5" fill="#ef5261" stroke="#0e2e4e" stroke-width="3.5" transform="rotate(-60)"/>
<circle r="17.5" fill="#0e2e4e"/>
<polygon points="-13,0 -6.5,-11.3 6.5,-11.3 13,0 6.5,11.3 -6.5,11.3" fill="none" stroke="#fbd84a" stroke-width="3"/>
<polygon points="-6.5,0 -3.25,-5.6 3.25,-5.6 6.5,0 3.25,5.6 -3.25,5.6" fill="none" stroke="#fbd84a" stroke-width="2.6"/>
<circle r="1.8" fill="#fbd84a"/>
</g></svg>
<!-- window bottom edge -->

</body></html>
